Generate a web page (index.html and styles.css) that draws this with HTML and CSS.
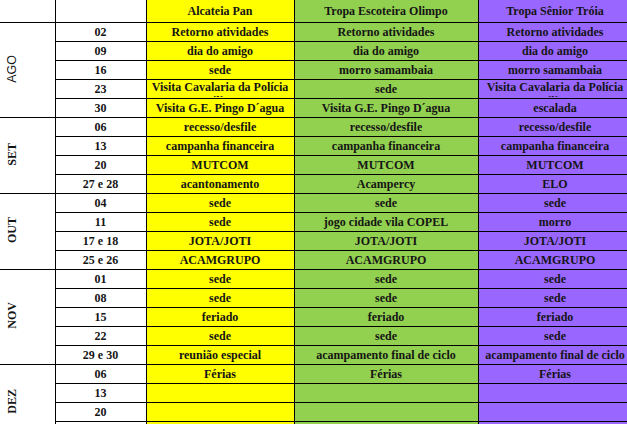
FILE: index.html
```html
<!DOCTYPE html>
<html lang="pt-BR">
<head>
<meta charset="utf-8">
<title>Calendário</title>
<link rel="stylesheet" href="styles.css">
</head>
<body>
<table class="cal">
  <colgroup>
    <col class="c-month"><col class="c-date"><col class="c-pan"><col class="c-olimpo"><col class="c-troia">
  </colgroup>
  <thead>
    <tr>
      <th class="corner"></th>
      <th class="datecol"></th>
      <th class="pan">Alcateia Pan</th>
      <th class="olimpo">Tropa Escoteira Olimpo</th>
      <th class="troia">Tropa Sênior Tróia</th>
    </tr>
  </thead>
  <tbody>
    <tr>
      <td class="month" rowspan="5"><span class="vert sans">AGO</span></td>
      <td class="date">02</td><td class="pan">Retorno atividades</td><td class="olimpo">Retorno atividades</td><td class="troia">Retorno atividades</td>
    </tr>
    <tr><td class="date">09</td><td class="pan">dia do amigo</td><td class="olimpo">dia do amigo</td><td class="troia">dia do amigo</td></tr>
    <tr><td class="date">16</td><td class="pan">sede</td><td class="olimpo">morro samambaia</td><td class="troia">morro samambaia</td></tr>
    <tr><td class="date">23</td><td class="pan top"><div class="clip">Visita Cavalaria da Polícia Militar</div></td><td class="olimpo">sede</td><td class="troia top"><div class="clip">Visita Cavalaria da Polícia Militar</div></td></tr>
    <tr><td class="date">30</td><td class="pan">Visita G.E. Pingo D´agua</td><td class="olimpo">Visita G.E. Pingo D´agua</td><td class="troia">escalada</td></tr>

    <tr>
      <td class="month" rowspan="4"><span class="vert">SET</span></td>
      <td class="date">06</td><td class="pan">recesso/desfile</td><td class="olimpo">recesso/desfile</td><td class="troia">recesso/desfile</td>
    </tr>
    <tr><td class="date">13</td><td class="pan">campanha financeira</td><td class="olimpo">campanha financeira</td><td class="troia">campanha financeira</td></tr>
    <tr><td class="date">20</td><td class="pan">MUTCOM</td><td class="olimpo">MUTCOM</td><td class="troia">MUTCOM</td></tr>
    <tr><td class="date">27 e 28</td><td class="pan">acantonamento</td><td class="olimpo">Acampercy</td><td class="troia">ELO</td></tr>

    <tr>
      <td class="month" rowspan="4"><span class="vert">OUT</span></td>
      <td class="date">04</td><td class="pan">sede</td><td class="olimpo">sede</td><td class="troia">sede</td>
    </tr>
    <tr><td class="date">11</td><td class="pan">sede</td><td class="olimpo">jogo cidade vila COPEL</td><td class="troia">morro</td></tr>
    <tr><td class="date">17 e 18</td><td class="pan">JOTA/JOTI</td><td class="olimpo">JOTA/JOTI</td><td class="troia">JOTA/JOTI</td></tr>
    <tr><td class="date">25 e 26</td><td class="pan">ACAMGRUPO</td><td class="olimpo">ACAMGRUPO</td><td class="troia">ACAMGRUPO</td></tr>

    <tr>
      <td class="month" rowspan="5"><span class="vert">NOV</span></td>
      <td class="date">01</td><td class="pan">sede</td><td class="olimpo">sede</td><td class="troia">sede</td>
    </tr>
    <tr><td class="date">08</td><td class="pan">sede</td><td class="olimpo">sede</td><td class="troia">sede</td></tr>
    <tr><td class="date">15</td><td class="pan">feriado</td><td class="olimpo">feriado</td><td class="troia">feriado</td></tr>
    <tr><td class="date">22</td><td class="pan">sede</td><td class="olimpo">sede</td><td class="troia">sede</td></tr>
    <tr><td class="date">29 e 30</td><td class="pan">reunião especial</td><td class="olimpo">acampamento final de ciclo</td><td class="troia">acampamento final de ciclo</td></tr>

    <tr>
      <td class="month" rowspan="4"><span class="vert">DEZ</span></td>
      <td class="date">06</td><td class="pan">Férias</td><td class="olimpo">Férias</td><td class="troia">Férias</td>
    </tr>
    <tr><td class="date">13</td><td class="pan"></td><td class="olimpo"></td><td class="troia"></td></tr>
    <tr><td class="date">20</td><td class="pan"></td><td class="olimpo"></td><td class="troia"></td></tr>
    <tr><td class="date"></td><td class="pan"></td><td class="olimpo"></td><td class="troia"></td></tr>
  </tbody>
</table>
</body>
</html>
```

FILE: styles.css
```css
html, body {
  margin: 0;
  padding: 0;
  background: #ffffff;
  overflow: hidden;
}

.cal {
  border-collapse: collapse;
  table-layout: fixed;
  width: 632px;
  font: bold 12px/14px "Liberation Serif", "Times New Roman", serif;
  color: #151515;
}

.c-month { width: 55px; }
.c-date { width: 91px; }
.c-pan { width: 148px; }
.c-olimpo { width: 184px; }
.c-troia { width: 154px; }

.cal th,
.cal td {
  border: 1px solid #000;
  padding: 0 2px;
  height: 18px;
  text-align: center;
  vertical-align: middle;
  white-space: nowrap;
  overflow: hidden;
}

.cal thead th {
  border-top: none;
  height: 22px;
  font-weight: bold;
}

.cal .corner,
.cal .month {
  border-left: none;
  background: #ffffff;
}

.cal .date { background: #ffffff; }
.cal .pan { background: #ffff00; }
.cal .olimpo { background: #92d050; }
.cal .troia { background: #9966ff; }

.cal .month {
  text-align: left;
  padding: 0 0 0 6px;
}

.vert {
  display: inline-block;
  writing-mode: vertical-rl;
  transform: rotate(180deg);
  line-height: 12px;
  font-size: 12px;
}

.vert.sans {
  font-family: "Liberation Sans", Arial, sans-serif;
  font-weight: normal;
  font-size: 12.5px;
}

.cal td.top {
  vertical-align: top;
  white-space: normal;
}

.clip {
  height: 17px;
  overflow: hidden;
}
```
